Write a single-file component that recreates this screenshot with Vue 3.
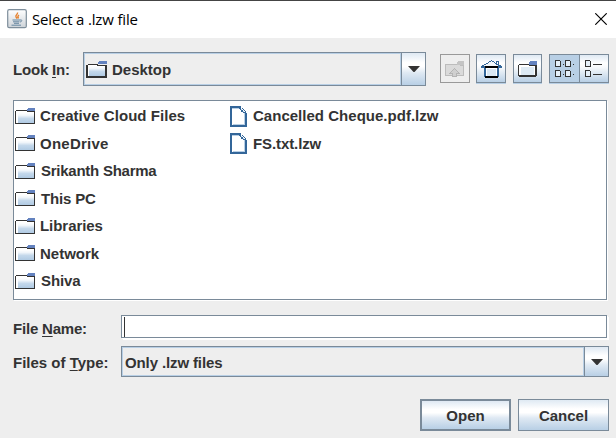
<script setup>
const folders = [
  { name: 'Creative Cloud Files', tracking: 0.05 },
  { name: 'OneDrive', tracking: 0.25 },
  { name: 'Srikanth Sharma', tracking: -0.25, indent: 1 },
  { name: 'This PC', tracking: -0.15, indent: 1 },
  { name: 'Libraries', tracking: -0.05 },
  { name: 'Network', tracking: 0 },
  { name: 'Shiva', tracking: -0.1, indent: 1 },
]
const files = [
  { name: 'Cancelled Cheque.pdf.lzw', tracking: 0.02 },
  { name: 'FS.txt.lzw', tracking: -0.1 },
]
</script>

<template>
  <div class="dialog">
    <svg class="defs" width="0" height="0" aria-hidden="true">
      <defs>
        <linearGradient id="paper" x1="0" y1="0" x2="0" y2="1">
          <stop offset="0" stop-color="#fff" />
          <stop offset="0.25" stop-color="#f0f5fa" />
          <stop offset="0.55" stop-color="#c4d8eb" />
          <stop offset="1" stop-color="#b0cae3" />
        </linearGradient>
        <linearGradient id="tile" x1="0" y1="0" x2="0" y2="1">
          <stop offset="0" stop-color="#fff" />
          <stop offset="1" stop-color="#cdd3d8" />
        </linearGradient>
      </defs>
    </svg>

    <header class="titlebar">
      <svg class="java" width="20" height="20" viewBox="0 0 20 20">
        <rect x="0.7" y="0.7" width="18.6" height="18" rx="1.5" fill="url(#tile)" stroke="#7e8e9b" stroke-width="1.2" />
        <path d="M10.500 3.500c.5 2-2.500 2.500-1.500 4.500l1 1.500M12 6c-1.500 1-1.500 2-.5 3.500" fill="none" stroke="#e68432" stroke-width="1.400" />
        <path d="M5.500 11h7.500M6 12.800h6.500M7 14.300h5M4.500 16.200h9.500M13 11c2.500-.5 2.500 1.500 0 2" fill="none" stroke="#6788a1" />
      </svg>
      <span class="title">Select a .lzw file</span>
      <svg class="close" width="12" height="12" viewBox="0 0 12 12">
        <path d="M0.300 0.300L11.700 11.700M11.700 0.300L0.300 11.700" stroke="#000" stroke-width="1.15" />
      </svg>
    </header>

    <section class="toolbar">
      <label class="look">Look <u>I</u>n:</label>
      <div class="combo">
        <div class="value">
          <svg class="place" width="21" height="17" viewBox="0 0 21 17" shape-rendering="crispEdges">
            <rect x="1" y="4" width="19" height="12" fill="#fff" />
            <rect x="3" y="5" width="16" height="10" fill="url(#paper)" />
            <path d="M0 4h2v11h17V5h2v12H0zM2 3h10v1H2zM11 4h10v1H11z" fill="#333" />
            <path d="M13 0h8v3h-9V1h1z" fill="#6382bf" />
          </svg>
          <span>Desktop</span>
        </div>
        <div class="arrow">
          <svg width="12" height="6" viewBox="0 0 12 6"><path d="M0 0H12L6.500 6H5.500Z" fill="#333" /></svg>
        </div>
      </div>

      <div class="tool disabled">
        <svg width="19" height="16" viewBox="0 0 19 16" shape-rendering="crispEdges">
          <path d="M0.500 3.500H12L18.500 4.500V14.500H0.500Z" fill="#dadada" stroke="#bcbcbc" />
          <path d="M13 0h6v4h-7V1h1z" fill="#c4c4c4" />
          <path d="M9.500 7.500l5 5h-3v3h-4v-3h-3z" fill="#cfcfcf" stroke="#b4b4b4" />
        </svg>
      </div>
      <div class="tool home">
        <svg width="21" height="18" viewBox="0 0 21 18" shape-rendering="crispEdges">
          <path d="M3 7h15v10H3z" fill="#336699" />
          <path d="M5 8h11v9H5z" fill="#fff" />
          <path d="M6 9h9v7H6z" fill="#d9e7f3" />
          <path d="M2 5h2V4h2V3h2V2h5v1h2v1h2v1h2v1H2z" fill="#f3f8fc" />
          <path d="M0 6h21v2H0zM1 5h2v1H1zM3 4h2v1H3zM5 3h2v1H5zM7 2h1v1H7zM8 1h2v1H8zM10 0h1v1h-1zM11 1h2v1h-2zM13 2h1v1h-1zM14 3h1v1h-1zM15 4h2v1h-2zM17 5h3v1h-3zM15 1h3v4h-1V2h-1v2h-1z" fill="#336699" />
          <path d="M4 6h13v2H4zM4 16h13v2H4z" fill="#000" />
        </svg>
      </div>
      <div class="tool create">
        <svg width="19" height="16" viewBox="0 0 19 16" shape-rendering="crispEdges">
          <rect x="1" y="4" width="17" height="11" fill="#fff" />
          <rect x="3" y="6" width="13" height="8" fill="#dfebf5" />
          <path d="M0 4h1v10h16V4h2v11h-1v1H1v-1H0zM1 3h11v1H1zM11 4h8v1h-8z" fill="#333" />
          <path d="M12 0h7v4h-8V1h1z" fill="#6382bf" />
        </svg>
      </div>
      <div class="tool list-view">
        <svg width="20" height="17" viewBox="0 0 20 17" shape-rendering="crispEdges">
          <g fill="#e6f0f9" stroke="#333"><path d="M.5.500h4l1 1v5h-5zM10.500.500h4l1 1v5h-5zM.5 10.500h4l1 1v5h-5zM10.500 10.500h4l1 1v5h-5z" /></g>
          <path d="M8 4h1v1H8zM18 4h1v1h-1zM8 14h1v1H8zM18 14h1v1h-1z" fill="#333" />
        </svg>
      </div>
      <div class="tool detail-view">
        <svg width="18" height="17" viewBox="0 0 18 17" shape-rendering="crispEdges">
          <g fill="#e6f0f9" stroke="#333"><path d="M.5.500h4l1 1v5h-5zM.5 10.500h4l1 1v5h-5z" /></g>
          <path d="M8 4h9v1H8zM8 14h9v1H8z" fill="#333" />
        </svg>
      </div>
    </section>

    <main class="listing">
      <ul class="folders">
        <li v-for="item in folders" :key="item.name" :class="{ indent: item.indent }">
          <svg width="20" height="16" viewBox="0 0 20 16" shape-rendering="crispEdges">
            <rect x="1" y="3" width="18" height="12" fill="#fff" />
            <rect x="3" y="5" width="16" height="10" fill="url(#paper)" />
            <path d="M0 3h1v12h18V4h1v12H0zM1 2h11v1H1zM12 3h8v1h-8z" fill="#333" />
            <path d="M13 0h7v3h-8V1h1z" fill="#6382bf" />
          </svg>
          <span :style="{ letterSpacing: item.tracking + 'px' }">{{ item.name }}</span>
        </li>
      </ul>
      <ul class="files">
        <li v-for="item in files" :key="item.name">
          <svg width="17" height="21" viewBox="0 0 17 21" shape-rendering="crispEdges">
            <path d="M2 2h9v3h4v14H2z" fill="#fff" />
            <path d="M3 18h11V7h1v12H3zM2 2h8v1H2zM11 3h1v1h1v1h1v1h-1V5h-1V4h-1z" fill="#b8cfe5" />
            <path d="M0 0h11v2H2v17h13V8h2v13H0zM9 2h2v1H9zM10 3h1v1h-1zM12 2h1v1h-1zM13 3h1v1h-1zM14 4h1v1h-1zM11 4h2v2h-2zM13 6h2v1h-2zM15 5h1v2h1v2h-2z" fill="#336699" />
          </svg>
          <span :style="{ letterSpacing: item.tracking + 'px' }">{{ item.name }}</span>
        </li>
      </ul>
    </main>

    <section class="form">
      <label class="name-label">File <u>N</u>ame:</label>
      <div class="field"><i class="caret"></i></div>
      <label class="type-label">Files of <u>T</u>ype:</label>
      <div class="combo type">
        <div class="value"><span>Only .lzw files</span></div>
        <div class="arrow">
          <svg width="12" height="6" viewBox="0 0 12 6"><path d="M0 0H12L6.500 6H5.500Z" fill="#333" /></svg>
        </div>
      </div>
    </section>

    <footer class="actions">
      <button class="primary">Open</button>
      <button>Cancel</button>
    </footer>
  </div>
</template>

<style>
body { margin: 0; background: #eee; }
</style>

<style scoped>
* { box-sizing: border-box; }
.dialog {
  width: 616px; height: 438px; overflow: hidden; background: #eee; color: #333;
  font: bold 15px/18px "Liberation Sans", Arial, sans-serif;
  display: flex; flex-direction: column;
}
.defs { position: absolute; }
svg { display: block; flex: none; }
u { text-decoration: underline; text-decoration-thickness: 1px; text-underline-offset: 2px; text-decoration-skip-ink: none; }
.titlebar { height: 38px; flex: none; border-top: 1px solid #444; background: #fff; display: flex; align-items: center; padding: 0 9px 0 7px; }
.java { margin-top: -1px; }
.close { margin-top: -1px; }
.title { margin: -2px 0 0 5px; flex: 1; font: 15px/20px "Open Sans", "Noto Sans", sans-serif; letter-spacing: -0.17px; color: #000; }
.toolbar { display: flex; height: 34px; margin: 14px 0 0 13px; flex: none; }
.look { width: 70px; line-height: 36px; letter-spacing: -0.2px; }
.combo { width: 343px; height: 34px; border: 1px solid #7a8a99; display: flex; }
.value { flex: 1; border: 1px solid #b8cfe5; padding: 2px 0 0 1px; display: flex; align-items: center; }
.value span { margin-left: 5px; }
.place { margin-top: -2px; }
.arrow { width: 24px; border-left: 1px solid #7a8a99; display: flex; align-items: center; justify-content: center; background: linear-gradient(#dfe9f3, #fff 30%, #fff 42%, #dfe9f3 62%, #b8cfe5); }
.tool { width: 30px; height: 29px; margin-top: 2px; border: 1px solid #7a8a99; box-shadow: 0 1px #b8cfe5; background: linear-gradient(#dfe9f3, #fff 30%, #f8fafc 45%, #b8cfe5); display: flex; align-items: flex-start; padding: 5px 0 0 4px; flex: none; }
.disabled { margin-left: 14px; padding-top: 6px; border-color: #999; background: #eee; box-shadow: none; }
.home { margin-left: 6px; }
.create { margin-left: 7px; width: 29px; padding-top: 6px; }
.list-view { margin-left: 7px; width: 31px; padding-left: 5px; background: #b8cfe5; }
.detail-view { margin-left: -1px; padding-left: 5px; }
.listing { width: 594px; height: 200px; flex: none; margin: 14px 0 0 13px; border: 1px solid #7a8a99; box-shadow: 1px 1px #fff; background: #fff; display: flex; }
ul { margin: 0; padding: 1.4px 0 0 1px; list-style: none; }
li { display: flex; align-items: center; height: 27.5px; white-space: nowrap; }
.folders { width: 215px; }
.folders svg { margin-top: -1px; }
.folders span { margin-left: 5px; }
.folders .indent span { margin-left: 6px; }
.files span { margin-left: 6px; }
.form { display: grid; grid-template-columns: 108px 488px; margin: 15px 0 0 13px; }
.form label { line-height: 27px; }
.form .name-label { letter-spacing: -0.2px; }
.form .type-label { line-height: 33px; }
.field { width: 486px; height: 23px; border: 1px solid #7a8a99; background: #fff; box-shadow: 1px 1px #fff, 2px 2px #fff; padding: 1px 0 0 2px; margin-bottom: 8px; }
.caret { display: block; width: 1px; height: 20px; background: #333; }
.type { width: 488px; height: 31px; }
.type .value { padding-left: 0; }
.type .value span { margin-left: 2px; letter-spacing: -0.12px; }
.actions { display: flex; gap: 7px; margin: 22px 7px 0 0; justify-content: flex-end; position: relative; margin-top: 22px; }
.form { margin-bottom: -2px; flex: none; }
button { width: 91px; height: 32px; padding: 2px 0 0; border: 1px solid #7a8a99; border-radius: 0; font: inherit; color: #333; background: linear-gradient(#dfe9f3, #fff 30%, #fff 42%, #dfe9f3 60%, #b8cfe5); }
.primary { border-width: 2px; }
</style>
